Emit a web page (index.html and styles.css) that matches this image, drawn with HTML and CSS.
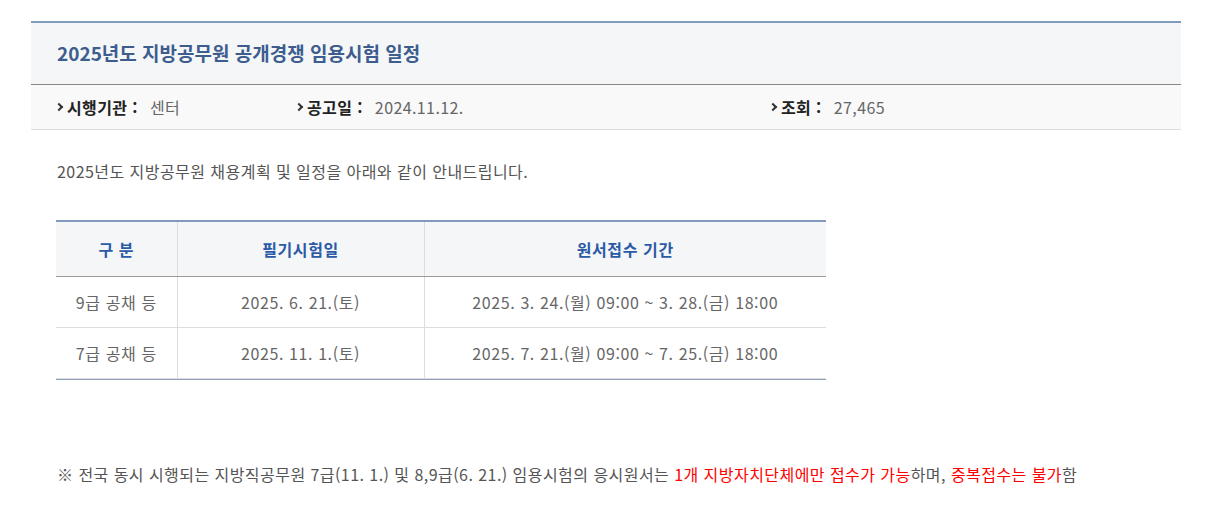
FILE: index.html
```html
<!DOCTYPE html>
<html lang="ko">
<head>
<meta charset="utf-8">
<title>2025년도 지방공무원 공개경쟁 임용시험 일정</title>
<link rel="stylesheet" href="styles.css">
</head>
<body>
<div class="board">
  <div class="board-head">
    <h1 class="board-title">2025년도 지방공무원 공개경쟁 임용시험 일정</h1>
  </div>
  <div class="board-info">
    <div class="info-item info-org"><span class="info-label">시행기관 :</span><span class="info-value">센터</span></div>
    <div class="info-item info-date"><span class="info-label">공고일 :</span><span class="info-value">2024.11.12.</span></div>
    <div class="info-item info-view"><span class="info-label">조회 :</span><span class="info-value">27,465</span></div>
  </div>
  <div class="board-body">
    <p class="intro">2025년도 지방공무원 채용계획 및 일정을 아래와 같이 안내드립니다.</p>
    <div class="table-wrap">
      <table class="schedule">
        <thead>
          <tr>
            <th class="c1">구 분</th>
            <th class="c2">필기시험일</th>
            <th class="c3">원서접수 기간</th>
          </tr>
        </thead>
        <tbody>
          <tr>
            <td>9급 공채 등</td>
            <td>2025. 6. 21.(토)</td>
            <td>2025. 3. 24.(월) 09:00 ~ 3. 28.(금) 18:00</td>
          </tr>
          <tr>
            <td>7급 공채 등</td>
            <td>2025. 11. 1.(토)</td>
            <td>2025. 7. 21.(월) 09:00 ~ 7. 25.(금) 18:00</td>
          </tr>
        </tbody>
      </table>
    </div>
    <p class="note">※ 전국 동시 시행되는 지방직공무원 7급(11. 1.) 및 8,9급(6. 21.) 임용시험의 응시원서는 <span class="red">1개 지방자치단체에만 접수가 가능</span>하며, <span class="red">중복접수는 불가</span>함</p>
  </div>
</div>
</body>
</html>
```

FILE: styles.css
```css
* { box-sizing: border-box; }
html, body { margin: 0; padding: 0; background: #fff; }
body {
  font-family: "Noto Sans CJK KR", "Noto Sans", sans-serif;
  color: #555;
}
.board {
  width: 1150px;
  margin: 21px 0 0 31px;
}
.board-head {
  border-top: 2px solid #7f9abd;
  border-bottom: 1px solid #888;
  background: #f5f6f8;
  height: 64px;
  padding: 0 26px 2px;
  display: flex;
  align-items: center;
}
.board-title {
  margin: 0;
  font-size: 19px;
  font-weight: 700;
  color: #3d5d8f;
  letter-spacing: 0;
}
.board-info {
  background: #f9f9f9;
  border-bottom: 1px solid #ddd;
  height: 45px;
  display: flex;
  align-items: center;
  padding: 0 0 0 25px;
  font-size: 16px;
  letter-spacing: 0.4px;
}
.info-item { display: flex; align-items: center; }
.info-item::before {
  content: "";
  width: 4px;
  height: 4px;
  border-right: 2px solid #333;
  border-bottom: 2px solid #333;
  transform: rotate(-45deg);
  margin-right: 5px;
}
.info-org { width: 240px; }
.info-date { width: 474px; }
.info-label { font-weight: 700; color: #222; margin-right: 12px; }
.info-value { color: #666; }
.board-body { padding: 0 26px; }
.intro {
  margin: 29px 0 37px;
  font-size: 16px;
  line-height: 24px;
  letter-spacing: 0.45px;
  color: #555;
}
.table-wrap {
  width: 770px;
  margin-left: -1px;
  border-bottom: 1px solid #8ea0bb;
}
.schedule {
  width: 770px;
  border-collapse: collapse;
  border-top: 2px solid #7f9abd;
  font-size: 16px;
  letter-spacing: 0.6px;
}
.schedule th {
  background: #f5f6f8;
  color: #2b5aa6;
  font-weight: 700;
  height: 55px;
  border-bottom: 1px solid #999;
  border-left: 1px solid #ddd;
  text-align: center;
}
.schedule td {
  height: 51px;
  text-align: center;
  color: #666;
  border-bottom: 1px solid #ddd;
  border-left: 1px solid #ddd;
}
.schedule th:first-child, .schedule td:first-child { border-left: 0; }
.schedule .c1 { width: 121px; }
.schedule .c2 { width: 247px; }
.note {
  margin: 82px 0 0;
  font-size: 16px;
  line-height: 24px;
  letter-spacing: 0.45px;
  color: #555;
}
.red { color: #f00; }
```
